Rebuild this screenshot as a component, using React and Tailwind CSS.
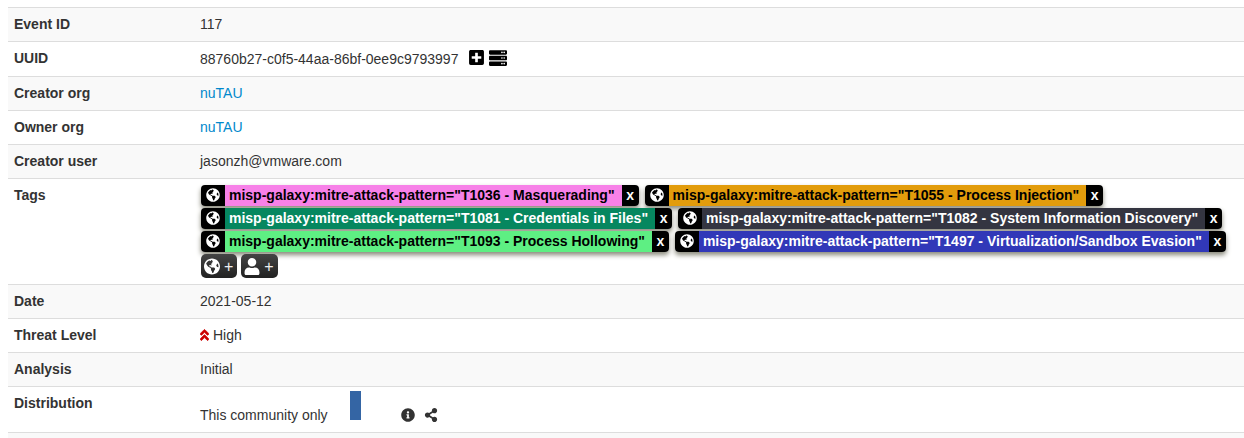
import React from "react";
import {
  FaAngleDoubleUp,
  FaGlobeAmericas,
  FaInfoCircle,
  FaPlusSquare,
  FaServer,
  FaShareAlt,
  FaUser,
} from "react-icons/fa";

const tags = [
  { name: 'misp-galaxy:mitre-attack-pattern="T1036 - Masquerading"', color: "bg-[#f781e8] text-black" },
  { name: 'misp-galaxy:mitre-attack-pattern="T1055 - Process Injection"', color: "bg-[#e29c0c] text-black" },
  { name: 'misp-galaxy:mitre-attack-pattern="T1081 - Credentials in Files"', color: "bg-[#06875f] text-white" },
  { name: 'misp-galaxy:mitre-attack-pattern="T1082 - System Information Discovery"', color: "bg-[#343541] text-white" },
  { name: 'misp-galaxy:mitre-attack-pattern="T1093 - Process Hollowing"', color: "bg-[#5eef83] text-black" },
  { name: 'misp-galaxy:mitre-attack-pattern="T1497 - Virtualization/Sandbox Evasion"', color: "bg-[#3138b8] text-white" },
];

const Row = ({ label, padding = "py-[6px]", children }) => (
  <tr className="border-t border-[#dddddd] odd:bg-[#f9f9f9]">
    <th scope="row" className="w-48 pl-[6px] py-[6px] text-left align-top font-bold">
      {label}
    </th>
    <td className={`align-top ${padding}`}>{children}</td>
  </tr>
);

const Tag = ({ name, color }) => (
  <span className="flex h-[21px] rounded-[4px] text-sm leading-[21px] font-bold whitespace-nowrap shadow-[0_3px_5px_#88887a]">
    <span className="flex w-6 items-start justify-center rounded-l-[4px] bg-black pt-[3px] text-white">
      <FaGlobeAmericas className="size-[14px]" />
    </span>
    <a href="#tag" className={`pr-[7px] pl-1 ${color}`}>
      {name}
    </a>
    <button type="button" aria-label={`Remove ${name}`} className="w-[17px] rounded-r-[4px] bg-black text-white">
      x
    </button>
  </span>
);

const AddTagButton = ({ label, icon: Icon }) => (
  <button
    type="button"
    aria-label={label}
    className="flex h-6 items-center gap-1 rounded-[5px] bg-linear-to-b from-[#444444] to-[#222222] pr-1 pl-[3px] text-base text-[#eeeeee]"
  >
    <Icon className="h-[17px] text-white" />
    <span className="pt-[2px]">+</span>
  </button>
);

const App = () => {
  return (
    <div className="bg-white pt-[7px] pl-2 font-['Liberation_Sans',Arial,sans-serif] text-sm leading-[21px] text-[#333333]">
      <table className="w-full border-collapse">
        <tbody>
          <Row label="Event ID">117</Row>
          <Row label="UUID">
            <div className="flex h-[22px] items-start gap-1">
              <span className="pt-px pr-[6px]">88760b27-c0f5-44aa-86bf-0ee9c9793997</span>
              <button type="button" aria-label="Extend event" className="pt-px text-black">
                <FaPlusSquare className="size-[17px]" />
              </button>
              <button type="button" aria-label="Check servers" className="pt-px text-black">
                <FaServer className="size-[18px]" />
              </button>
            </div>
          </Row>
          <Row label="Creator org">
            <a href="#creator-org" className="text-[#0088cc]">nuTAU</a>
          </Row>
          <Row label="Owner org">
            <a href="#owner-org" className="text-[#0088cc]">nuTAU</a>
          </Row>
          <Row label="Creator user">jasonzh@vmware.com</Row>
          <Row label="Tags">
            <div className="flex flex-wrap gap-x-[6px] gap-y-[2px] pl-[1px]">
              {tags.map((tag) => (
                <Tag key={tag.name} name={tag.name} color={tag.color} />
              ))}
            </div>
            <div className="flex gap-1 pt-[2px] pl-[1px]">
              <AddTagButton label="Add a tag" icon={FaGlobeAmericas} />
              <AddTagButton label="Add a local tag" icon={FaUser} />
            </div>
          </Row>
          <Row label="Date">2021-05-12</Row>
          <Row label="Threat Level">
            <div className="flex items-center gap-1">
              <FaAngleDoubleUp className="mb-[2px] w-[9px] text-[#cc0000]" stroke="currentColor" strokeWidth="24" />
              High
            </div>
          </Row>
          <Row label="Analysis">Initial</Row>
          <Row label="Distribution" padding="pt-1 pb-[6px]">
            <div className="flex items-end">
              <span>This community only</span>
              <div className="mb-[6px] ml-[22px] h-[29px] w-[11px] bg-[#3465a4]" />
              <div className="mb-1 ml-10 flex gap-[9px]">
                <button type="button" aria-label="Distribution info">
                  <FaInfoCircle className="size-[14px]" />
                </button>
                <button type="button" aria-label="Distribution graph">
                  <FaShareAlt className="size-[14px]" />
                </button>
              </div>
            </div>
          </Row>
          <tr className="border-t border-[#dddddd] bg-[#f9f9f9]">
            <td colSpan={2} className="h-[5px]" />
          </tr>
        </tbody>
      </table>
    </div>
  );
};

export default App;
